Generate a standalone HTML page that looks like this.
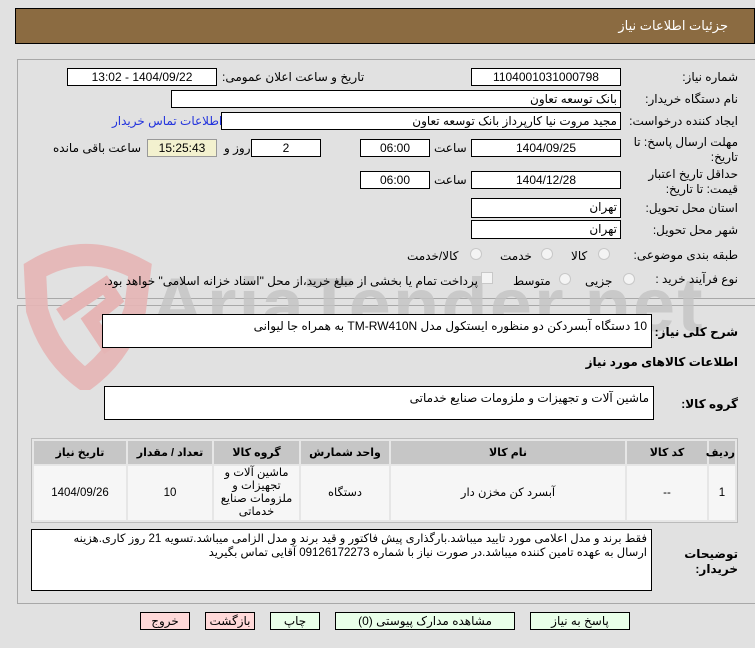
<!DOCTYPE html>
<html><head><meta charset="utf-8">
<style>
*{box-sizing:border-box;margin:0;padding:0}
body{width:755px;height:648px;background:#e1e1e1;font-family:"Liberation Sans","DejaVu Sans",sans-serif;font-size:12px;color:#000;position:relative;overflow:hidden;direction:rtl}
.a{position:absolute;white-space:nowrap}
.in{position:absolute;background:#fff;border:1px solid #000;height:18px;line-height:16px;font-size:12px;padding:0 3px;white-space:nowrap;overflow:hidden}
.c{text-align:center}
.r{text-align:right}
.lbl{position:absolute;font-size:12px;white-space:nowrap}
.rad{position:absolute;width:12px;height:12px;border:1px solid #c8c8c8;border-radius:50%;background:#f4f4f4}
.btn{position:absolute;top:612px;height:18px;border:1px solid #000;font-size:12px;line-height:16px;text-align:center}
.ta{position:absolute;background:#fff;border:1px solid #000;font-size:12px;padding:2px 4px;line-height:20px}
table{position:absolute;left:31px;top:438px;width:707px;border:1px solid #bbb;border-collapse:separate;border-spacing:2px;background:#e6e6e6;table-layout:fixed}
th{background:#c6c6c6;height:23px;font-size:11px;font-weight:bold}
td{background:#f6f6f6;height:54px;text-align:center;font-size:11.5px;line-height:13px}
</style></head><body>
<div class="a" style="left:15px;top:8px;width:740px;height:36px;background:#8b6b41;border:1px solid #000"></div>
<div class="a" style="right:27px;top:18px;color:#fff;font-size:13px">جزئیات اطلاعات نیاز</div>

<div class="a" style="left:17px;top:59px;width:738px;height:240px;border:1px solid #a8a8a8;border-right:none"></div>
<div class="a" style="left:17px;top:305px;width:738px;height:299px;border:1px solid #a8a8a8;border-right:none"></div>

<!-- watermark -->
<svg class="a" style="left:15px;top:240px" width="140" height="150" viewBox="0 0 140 150">
<path d="M20 30 Q70 0 125 30 L120 70 Q105 115 70 140 Q35 115 22 70 Z" fill="none" stroke="#e5b5b5" stroke-width="22" opacity="0.9"/>
<path d="M45 75 L90 45 L100 60 L75 80 L95 110" fill="none" stroke="#e5b5b5" stroke-width="14"/>
</svg>
<div class="a" style="left:150px;top:262px;font-size:76px;font-weight:bold;color:#c4c4c4;direction:ltr;opacity:0.8;letter-spacing:2px">AriaTender.net</div>

<div class="lbl" style="right:17px;top:70px">شماره نیاز:</div>
<div class="in c" style="left:471px;top:68px;width:150px">1104001031000798</div>
<div class="lbl" style="left:222px;top:70px">تاریخ و ساعت اعلان عمومی:</div>
<div class="in c" style="left:67px;top:68px;width:150px">1404/09/22 - 13:02</div>

<div class="lbl" style="right:17px;top:92px">نام دستگاه خریدار:</div>
<div class="in r" style="left:171px;top:90px;width:450px">بانک توسعه تعاون</div>

<div class="lbl" style="right:17px;top:114px">ایجاد کننده درخواست:</div>
<div class="in r" style="left:221px;top:112px;width:400px">مجید مروت نیا کارپرداز بانک توسعه تعاون</div>
<div class="lbl" style="left:112px;top:114px;color:#2233dd">اطلاعات تماس خریدار</div>

<div class="lbl" style="right:17px;top:135px;line-height:15px;text-align:right">مهلت ارسال پاسخ: تا<br>تاریخ:</div>
<div class="in c" style="left:471px;top:139px;width:150px">1404/09/25</div>
<div class="lbl" style="left:434px;top:141px">ساعت</div>
<div class="in c" style="left:360px;top:139px;width:70px">06:00</div>
<div class="in c" style="left:251px;top:139px;width:70px">2</div>
<div class="lbl" style="left:224px;top:141px">روز و</div>
<div class="in c" style="left:147px;top:139px;width:70px;background:#f3f1cf;border-color:#999">15:25:43</div>
<div class="lbl" style="left:53px;top:141px">ساعت باقی مانده</div>

<div class="lbl" style="right:17px;top:167px;line-height:15px;text-align:right">حداقل تاریخ اعتبار<br>قیمت: تا تاریخ:</div>
<div class="in c" style="left:471px;top:171px;width:150px">1404/12/28</div>
<div class="lbl" style="left:434px;top:173px">ساعت</div>
<div class="in c" style="left:360px;top:171px;width:70px">06:00</div>

<div class="lbl" style="right:17px;top:201px">استان محل تحویل:</div>
<div class="in r" style="left:471px;top:198px;width:150px;height:20px">تهران</div>
<div class="lbl" style="right:17px;top:223px">شهر محل تحویل:</div>
<div class="in r" style="left:471px;top:220px;width:150px;height:19px">تهران</div>

<div class="lbl" style="right:17px;top:248px">طبقه بندی موضوعی:</div>
<div class="rad" style="left:598px;top:248px"></div>
<div class="lbl" style="left:571px;top:249px">کالا</div>
<div class="rad" style="left:541px;top:248px"></div>
<div class="lbl" style="left:500px;top:249px">خدمت</div>
<div class="rad" style="left:470px;top:248px"></div>
<div class="lbl" style="left:407px;top:249px">کالا/خدمت</div>

<div class="lbl" style="right:17px;top:272px">نوع فرآیند خرید :</div>
<div class="rad" style="left:623px;top:273px"></div>
<div class="lbl" style="left:585px;top:274px">جزیی</div>
<div class="rad" style="left:559px;top:273px"></div>
<div class="lbl" style="left:513px;top:274px">متوسط</div>
<div class="a" style="left:481px;top:272px;width:12px;height:12px;border:1px solid #c8c8c8;background:#f4f4f4"></div>
<div class="lbl" style="right:277px;top:274px">پرداخت تمام یا بخشی از مبلغ خرید،از محل "اسناد خزانه اسلامی" خواهد بود.</div>

<div class="lbl" style="right:17px;top:325px;font-weight:bold">شرح کلی نیاز:</div>
<div class="ta r" style="left:102px;top:314px;width:550px;height:34px;line-height:18px">10 دستگاه آبسردکن دو منظوره ایستکول مدل TM-RW410N به همراه جا لیوانی</div>
<div class="lbl" style="right:17px;top:355px;font-weight:bold">اطلاعات کالاهای مورد نیاز</div>
<div class="lbl" style="right:17px;top:397px;font-weight:bold">گروه کالا:</div>
<div class="ta r" style="left:104px;top:386px;width:550px;height:34px;line-height:18px">ماشین آلات و تجهیزات و ملزومات صنایع خدماتی</div>

<table>
<colgroup><col style="width:26px"><col style="width:80px"><col style="width:234px"><col style="width:88px"><col style="width:85px"><col style="width:84px"><col></colgroup>
<tr><th>ردیف</th><th>کد کالا</th><th>نام کالا</th><th>واحد شمارش</th><th>گروه کالا</th><th>تعداد / مقدار</th><th>تاریخ نیاز</th></tr>
<tr><td>1</td><td>--</td><td>آبسرد کن مخزن دار</td><td>دستگاه</td><td>ماشین آلات و<br>تجهیزات و<br>ملزومات صنایع<br>خدماتی</td><td>10</td><td>1404/09/26</td></tr>
</table>

<div class="lbl" style="right:17px;top:547px;font-weight:bold;line-height:15px">توضیحات<br>خریدار:</div>
<div class="ta r" style="left:31px;top:529px;width:621px;height:62px;line-height:14px;font-size:11.5px;white-space:normal">فقط برند و مدل اعلامی مورد تایید میباشد.بارگذاری پیش فاکتور و قید برند و مدل الزامی میباشد.تسویه 21 روز کاری.هزینه<br>ارسال به عهده تامین کننده میباشد.در صورت نیاز با شماره 09126172273 آقایی تماس بگیرید</div>

<div class="btn" style="left:140px;width:50px;background:#ffd9d9">خروج</div>
<div class="btn" style="left:205px;width:50px;background:#ffd9d9">بازگشت</div>
<div class="btn" style="left:270px;width:50px;background:#e9ffe9">چاپ</div>
<div class="btn" style="left:335px;width:180px;background:#e9ffe9">مشاهده مدارک پیوستی (0)</div>
<div class="btn" style="left:530px;width:100px;background:#e9ffe9">پاسخ به نیاز</div>
</body></html>
